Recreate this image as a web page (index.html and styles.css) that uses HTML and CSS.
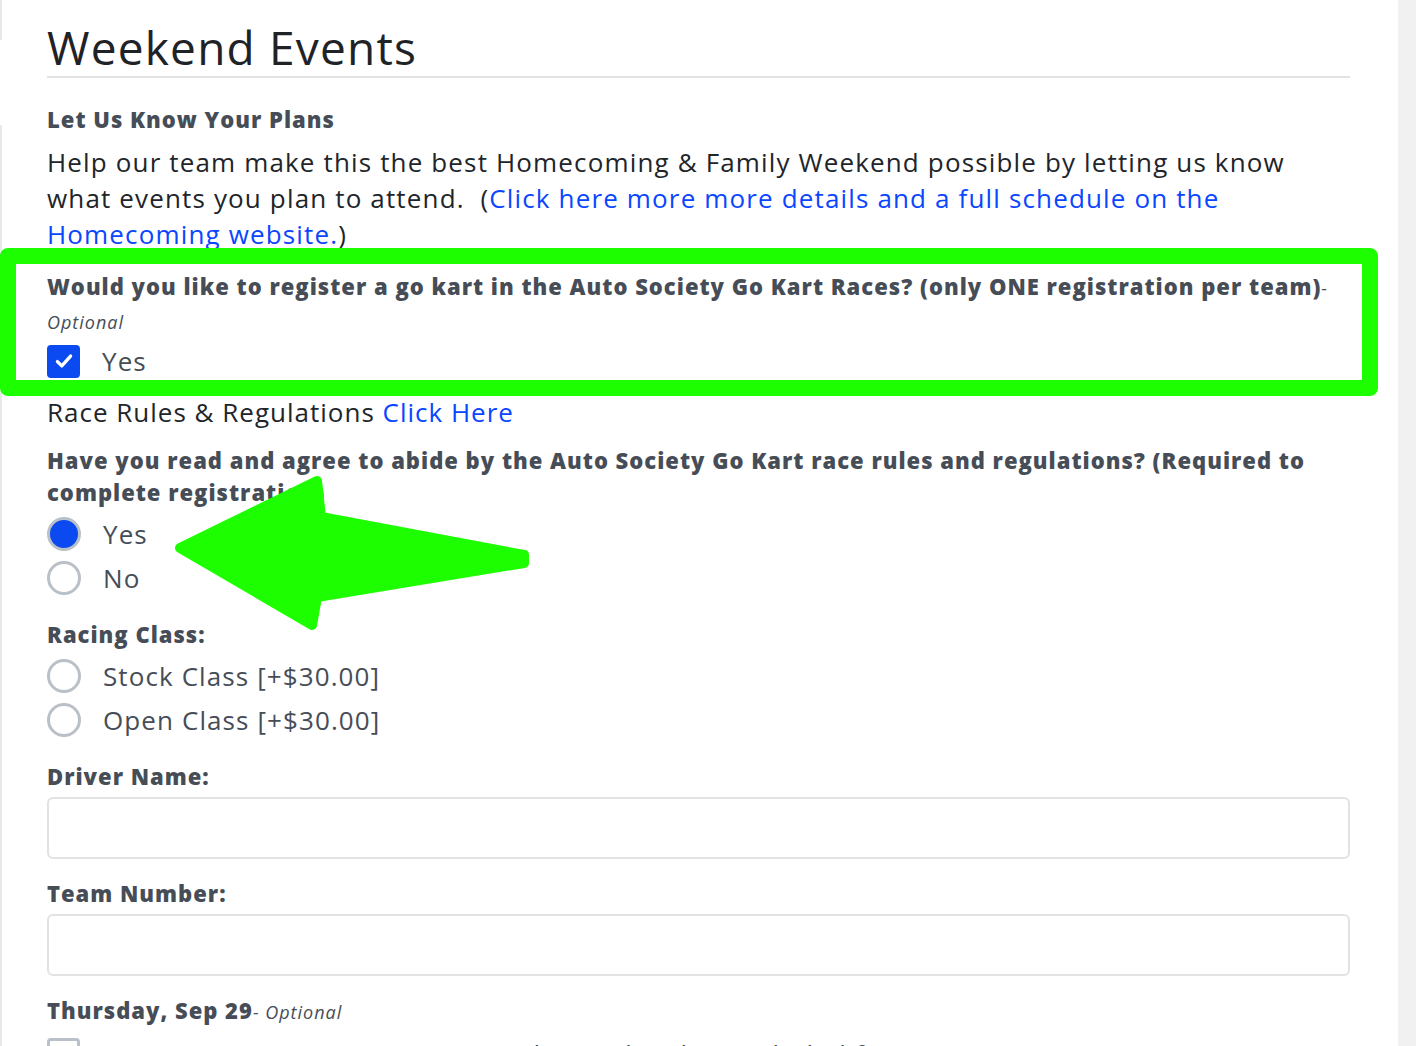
FILE: index.html
```html
<!DOCTYPE html>
<html lang="en">
<head>
    <meta charset="UTF-8">
    <meta name="viewport" content="width=device-width, initial-scale=1.0">
    <title>Weekend Events</title>
    <link rel="stylesheet" href="styles.css">
</head>
<body>
    <div class="page">
        <div class="rail-left">
            <span class="rail-top"></span>
            <span class="rail-gap"></span>
            <span class="rail-bottom"></span>
        </div>

        <main class="content">
            <h1>Weekend Events</h1>

            <div class="intro">
                <h2 class="label">Let Us Know Your Plans</h2>
                <p class="lead">Help our team make this the best Homecoming &amp; Family Weekend possible by letting us know what events you plan to attend.&nbsp; (<a href="#">Click here more more details and a full schedule on the Homecoming website.</a>)</p>
            </div>

            <div class="field">
                <div class="label">Would you like to register a go kart in the Auto Society Go Kart Races? (only ONE registration per team)<span class="optional">- Optional</span></div>
                <div class="choices choices-close">
                    <label class="choice">
                        <span class="box checked">
                            <svg viewBox="0 0 20 20" width="22" height="22"><path d="M4 10.5l4 4 8-9" fill="none" stroke="#fff" stroke-width="3" stroke-linecap="round" stroke-linejoin="round"/></svg>
                        </span>
                        Yes
                    </label>
                </div>
            </div>

            <p class="rules">Race Rules &amp; Regulations <a href="#">Click Here</a></p>

            <div class="field field-tight">
                <div class="label">Have you read and agree to abide by the Auto Society Go Kart race rules and regulations? (Required to complete registration)</div>
                <div class="choices">
                    <label class="choice"><span class="radio checked"></span>Yes</label>
                    <label class="choice"><span class="radio"></span>No</label>
                </div>
            </div>

            <div class="field">
                <div class="label">Racing Class:</div>
                <div class="choices">
                    <label class="choice"><span class="radio"></span>Stock Class [+$30.00]</label>
                    <label class="choice"><span class="radio"></span>Open Class [+$30.00]</label>
                </div>
            </div>

            <div class="field">
                <label class="label" for="driver">Driver Name:</label>
                <input type="text" id="driver" class="text-input">
            </div>

            <div class="field">
                <label class="label" for="team">Team Number:</label>
                <input type="text" id="team" class="text-input">
            </div>

            <div class="field">
                <div class="label">Thursday, Sep 29<span class="optional">- Optional</span></div>
                <div class="choices">
                    <label class="choice"><span class="box"></span>(Generic Text &mdash; University Foundation (lunch is included for everyone))</label>
                </div>
            </div>
        </main>

        <div class="rail-right"></div>

        <!-- annotation marks drawn over the form -->
        <div class="mark-box"></div>
        <svg class="mark-arrow" width="560" height="200" viewBox="0 0 560 200">
            <polygon points="180,93 317,26 321,62 524,100 524,108 317,142 312,170" fill="#1dff00" stroke="#1dff00" stroke-width="10" stroke-linejoin="round"/>
        </svg>
    </div>
</body>
</html>
```

FILE: styles.css
```css
body {
 margin: 0;
 background-color: #fff;
 font-family: "Open Sans", "Noto Sans", sans-serif;
 color: #212529;
}

.page {
 position: relative;
 display: flex;
 height: 1046px;
 overflow: hidden;
}

.rail-left {
 display: flex;
 flex-direction: column;
 width: 2px;
}

.rail-top {
 height: 40px;
 background-color: #e8e8e8;
}

.rail-gap {
 height: 85px;
}

.rail-bottom {
 flex: 1;
 background-color: #e8e8e8;
}

.content {
 width: 1303px;
 padding: 0 0 0 45px;
}

.rail-right {
 margin-left: auto;
 width: 18px;
 background-color: #f1f1f1;
}

h1 {
 margin: 20px 0 0;
 padding-bottom: 1px;
 font-size: 46px;
 font-weight: 400;
 line-height: 55px;
 letter-spacing: 1.2px;
 color: #1f2327;
 border-bottom: 2px solid #e3e3e3;
}

.label {
 display: block;
 font-size: 22px;
 font-weight: 800;
 line-height: 32px;
 letter-spacing: 1px;
 color: #464d56;
}

.optional {
 font-size: 18px;
 font-weight: 400;
 font-style: italic;
 letter-spacing: 1px;
 color: #464d56;
}

.intro {
 margin-top: 25px;
}

.intro h2 {
 margin: 0;
}

.lead {
 margin: 9px 0 0;
 font-size: 26px;
 line-height: 36px;
 letter-spacing: 1.15px;
}

a {
 color: #0a46ff;
 text-decoration: none;
}

.field {
 margin-top: 18px;
}

.field-tight {
 margin-top: 14px;
}

.rules {
 margin: 11px 0 0;
 font-size: 26px;
 line-height: 36px;
 letter-spacing: 1px;
}

.choices {
 margin-top: 4px;
}

.choices-close {
 margin-top: 1px;
}

.choice {
 display: flex;
 align-items: center;
 gap: 22px;
 height: 44px;
 font-size: 26px;
 letter-spacing: 1.1px;
 color: #464d56;
}

.radio {
 width: 28px;
 height: 28px;
 border: 3px solid #b9c0c7;
 border-radius: 50%;
}

.radio.checked {
 background-color: #0a4af0;
}

.box {
 display: flex;
 align-items: center;
 justify-content: center;
 width: 27px;
 height: 27px;
 border: 3px solid #b9c0c7;
 border-radius: 4px;
}

.box.checked {
 background-color: #0a4af0;
 border-color: #0a4af0;
}

.text-input {
 display: block;
 width: 100%;
 height: 62px;
 margin-top: 5px;
 border: 2px solid #e2e2e2;
 border-radius: 6px;
 box-sizing: border-box;
}

.mark-box {
 position: absolute;
 left: 0;
 top: 248px;
 width: 1378px;
 height: 148px;
 border: 16px solid #1dff00;
 border-radius: 8px;
 box-sizing: border-box;
 pointer-events: none;
}

.mark-arrow {
 position: absolute;
 left: 0;
 top: 455px;
 pointer-events: none;
}
```
